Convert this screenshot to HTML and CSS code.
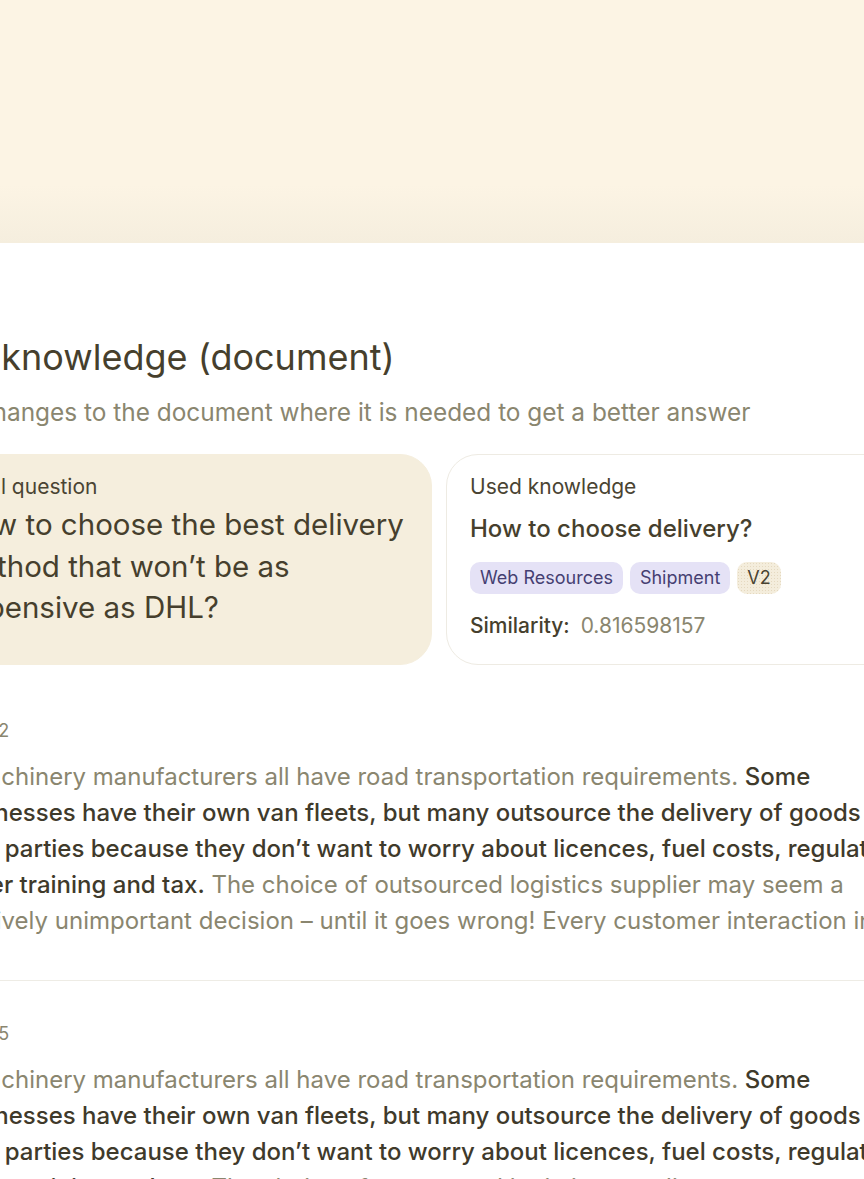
FILE: index.html
```html
<!DOCTYPE html>
<html lang="en">
<head>
    <meta charset="UTF-8">
    <meta name="viewport" content="width=device-width, initial-scale=1.0">
    <title>Edit knowledge (document)</title>
    <link rel="stylesheet" href="styles.css">
</head>
<body>
    <div class="hero"></div>

    <main class="content">
        <h1 class="title">Edit knowledge (document)</h1>
        <p class="subtitle">Make changes to the document where it is needed to get a better answer</p>

        <div class="cards">
            <section class="card card-question">
                <div class="card-label">Initial question</div>
                <p class="question">How to choose the best delivery method that won’t be as expensive as DHL?</p>
            </section>
            <section class="card card-knowledge">
                <div class="card-label">Used knowledge</div>
                <div class="knowledge-title">How to choose delivery?</div>
                <div class="tags">
                    <span class="tag">Web Resources</span>
                    <span class="tag">Shipment</span>
                    <span class="tag tag-version">V2</span>
                </div>
                <div class="similarity">
                    <span class="similarity-label">Similarity:</span>
                    <span class="similarity-value">0.816598157</span>
                </div>
            </section>
        </div>

        <div class="chunks">
            <article class="chunk">
                <div class="chunk-page">Page 2</div>
                <p class="chunk-text">…machinery manufacturers all have road transportation requirements. <b>Some</b><br><b>businesses have their own van fleets, but many outsource the delivery of goods to</b><br><b>third parties because they don’t want to worry about licences, fuel costs, regulations,</b><br><b>driver training and tax.</b> The choice of outsourced logistics supplier may seem a<br>relatively unimportant decision – until it goes wrong! Every customer interaction involves</p>
            </article>
            <article class="chunk">
                <div class="chunk-page">Page 5</div>
                <p class="chunk-text">…machinery manufacturers all have road transportation requirements. <b>Some</b><br><b>businesses have their own van fleets, but many outsource the delivery of goods to</b><br><b>third parties because they don’t want to worry about licences, fuel costs, regulations,</b><br><b>driver training and tax.</b> The choice of outsourced logistics supplier may seem a<br>relatively unimportant decision – until it goes wrong! Every customer interaction involves</p>
            </article>
        </div>
    </main>
</body>
</html>
```

FILE: styles.css
```css
body {
    margin: 0;
    background-color: #FFFFFF;
    font-family: Inter, 'Noto Sans', sans-serif;
    color: #463F2D;
    overflow: hidden;
}

.hero {
    height: 243px;
    background: linear-gradient(to bottom, #FCF4E4 0, #FCF4E4 185px, #F5EEDE 243px);
}

.content {
    margin-left: -70px;
    width: 1100px;
}

.title {
    margin: 91px 0 0 -3px;
    font-size: 36px;
    line-height: 46px;
    font-weight: 400;
    color: #463F2D;
}

.subtitle {
    margin: 15px 0 0 -21px;
    font-size: 24.4px;
    line-height: 34px;
    color: #8A866F;
}

.cards {
    display: flex;
    gap: 14px;
    margin-top: 25px;
}

.card {
    width: 502px;
    box-sizing: border-box;
    padding: 18px 18px 24px 23px;
    border-radius: 32px;
    border: 1px solid #EEEBE3;
}

.card-question {
    background-color: #F5EEDD;
    border-color: #F5EEDD;
}

.card-knowledge {
    background-color: #FFFFFF;
}

.card-label {
    font-size: 21px;
    line-height: 28px;
    color: #4A4433;
}

.question {
    margin: 3px 0 0;
    font-size: 29.5px;
    line-height: 41.5px;
    color: #463F2D;
}

.knowledge-title {
    margin-top: 12px;
    font-size: 24px;
    line-height: 32px;
    font-weight: 500;
    color: #463F2D;
}

.tags {
    display: flex;
    gap: 7px;
    margin-top: 17px;
}

.tag {
    height: 32px;
    line-height: 32px;
    padding: 0 10px;
    border-radius: 10px;
    font-size: 18px;
    background-color: #E5E2F6;
    color: #453F72;
}

.tag-version {
    background-color: #F4EDDC;
    background-image: radial-gradient(rgba(200, 180, 140, 0.35) 0.6px, transparent 0.8px);
    background-size: 3px 3px;
    color: #4A4433;
}

.similarity {
    margin-top: 18px;
    font-size: 21px;
    line-height: 28px;
}

.similarity-label {
    font-weight: 500;
    color: #463F2D;
    margin-right: 5px;
}

.similarity-value {
    color: #8A866F;
}

.chunks {
    margin-top: 13px;
}

.chunk {
    padding: 41px 16px;
    border-bottom: 1px solid #EEECE5;
}

.chunk-page {
    margin-left: 4px;
    font-size: 18px;
    line-height: 24px;
    color: #8A866F;
}

.chunk-text {
    margin: 16px 0 0;
    font-size: 24px;
    line-height: 36px;
    color: #8A866F;
    white-space: nowrap;
}

.chunk-text b {
    font-weight: 500;
    color: #3F3A2B;
}
```
